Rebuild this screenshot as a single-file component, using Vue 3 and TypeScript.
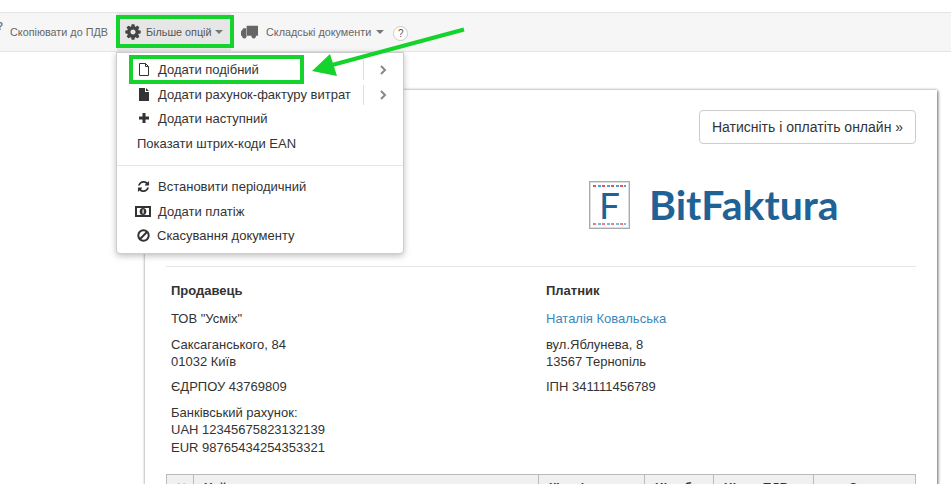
<script setup lang="ts">
const cog = 'M1152 896q0-106-75-181t-181-75-181 75-75 181 75 181 181 75 181-75 75-181zm512-109v222q0 12-8 23t-20 13l-185 28q-19 54-39 91 35 50 107 138 10 12 10 25t-9 23q-27 37-99 108t-94 71q-12 0-26-9l-138-108q-44 23-91 38-16 136-29 186-7 28-36 28h-222q-14 0-24.500-8.500t-11.500-21.500l-28-184q-49-16-90-37l-141 107q-10 9-25 9-14 0-25-11-126-114-165-168-7-10-7-23 0-12 8-23 15-21 51-66.500t54-70.500q-27-50-41-99l-183-27q-13-2-21-12.500t-8-23.500v-222q0-12 8-23t19-13l186-28q14-46 39-92-40-57-107-138-10-12-10-24 0-10 9-23 26-36 98.500-107.500t94.500-71.500q13 0 26 10l138 107q44-23 91-38 16-136 29-186 7-28 36-28h222q14 0 24.500 8.500t11.500 21.500l28 184q49 16 90 37l142-107q9-9 24-9 13 0 25 10 129 119 165 170 7 8 7 22 0 12-8 23-15 21-51 66.500t-54 70.500q26 50 41 98l183 28q13 2 21 12.500t8 23.500z'
const refresh = 'M1639 1056q0 5-1 7-64 268-268 434.500t-478 166.500q-146 0-282.500-55t-243.500-157l-129 129q-19 19-45 19t-45-19-19-45v-448q0-26 19-45t45-19h448q26 0 45 19t19 45-19 45l-137 137q71 66 161 102t187 36q134 0 250-65t186-179q11-17 53-117 8-23 30-23h192q13 0 22.500 9.500t9.500 22.500zm25-800v448q0 26-19 45t-45 19h-448q-26 0-45-19t-19-45 19-45l138-138q-148-137-349-137-134 0-250 65t-186 179q-11 17-53 117-8 23-30 23h-199q-13 0-22.500-9.500t-9.500-22.500v-7q65-268 270-434.500t480-166.500q146 0 284 55.500t245 156.500l130-129q19-19 45-19t45 19 19 45z'
const columns = [
  { label: '№', width: 27, align: 'center' },
  { label: 'Найменування', width: 345, align: 'left' },
  { label: 'Кількість', width: 106, align: 'left' },
  { label: 'Ціна без', width: 69, align: 'center' },
  { label: 'Ціна з ПДВ', width: 100, align: 'left' },
  { label: 'Сума', width: 100, align: 'center' },
]
</script>

<template>
  <div class="page">
    <div class="toolbar">
      <span class="clipped">?</span>
      <span class="tool copy">Скопіювати до ПДВ</span>
      <span class="tool more">
        <svg class="gear" viewBox="0 0 1792 1792"><path :d="cog" /></svg>
        <span>Більше опцій</span>
        <i class="caret tight"></i>
      </span>
      <span class="tool docs">
        <svg class="truck" viewBox="0 0 18 14">
          <path d="M6 0.500h12v10.500H6zM0 6.500 2.500 3H5.500v8H0z" />
          <circle cx="3.500" cy="11.500" r="2.300" />
          <circle cx="13.500" cy="11.500" r="2.300" />
        </svg>
        <span>Складські документи</span>
        <i class="caret"></i>
      </span>
      <span class="help">?</span>
    </div>

    <main class="sheet">
      <div class="pay-row"><button class="pay" type="button">Натисніть і оплатіть онлайн »</button></div>
      <div class="logo">
        <div class="mark">
          <span class="stripe"></span>
          <span class="mark-letter">F</span>
          <span class="stripe faded"></span>
        </div>
        <span class="brand">BitFaktura</span>
      </div>
      <hr class="rule" />
      <div class="parties">
        <section>
          <h3>Продавець</h3>
          <p>ТОВ "Усміх"</p>
          <p>Саксаганського, 84<br />01032 Київ</p>
          <p>ЄДРПОУ 43769809</p>
          <p>Банківський рахунок:<br />UAH 12345675823132139<br />EUR 98765434254353321</p>
        </section>
        <section>
          <h3>Платник</h3>
          <p class="link">Наталія Ковальська</p>
          <p>вул.Яблунева, 8<br />13567 Тернопіль</p>
          <p>ІПН 341111456789</p>
        </section>
      </div>
      <div class="table-head">
        <div
          v-for="col in columns"
          :key="col.label"
          class="th"
          :style="{ width: col.width + 'px', textAlign: col.align }"
        >{{ col.label }}</div>
      </div>
    </main>

    <div class="menu">
      <div class="row split">
        <svg class="ic file" viewBox="0 0 10 13"><path d="M.5.500h6l3 3v9H.500z M6.500.500v3h3" fill="#fff" stroke="#333" stroke-width="1" /></svg>
        <span class="label">Додати подібний</span>
        <span class="chev">
          <svg viewBox="0 0 8 10"><path d="M2 1l4 4-4 4" /></svg>
        </span>
      </div>
      <div class="row split">
        <svg class="ic file" viewBox="0 0 10 13"><path d="M0 0h6v4h4v9H0zM7 0l3 3H7z" fill="#333" /></svg>
        <span class="label">Додати рахунок-фактуру витрат</span>
        <span class="chev">
          <svg viewBox="0 0 8 10"><path d="M2 1l4 4-4 4" /></svg>
        </span>
      </div>
      <div class="row">
        <svg class="ic plus" viewBox="0 0 10 10"><path d="M3.500 0h3v3.500H10v3H6.500V10h-3V6.500H0v-3h3.500z" fill="#333" /></svg>
        <span class="label">Додати наступний</span>
      </div>
      <div class="row plain"><span class="label">Показати штрих-коди EAN</span></div>
      <div class="divider"></div>
      <div class="row">
        <svg class="ic wide" viewBox="0 0 1792 1792"><path :d="refresh" fill="#333" /></svg>
        <span class="label">Встановити періодичний</span>
      </div>
      <div class="row">
        <svg class="ic money" viewBox="0 0 16 11">
          <path fill-rule="evenodd" fill="#333" d="M0 0h16v11H0zM2 2v7h12V2z" />
          <ellipse cx="8" cy="5.500" rx="3.300" ry="3.500" fill="#333" />
          <rect x="7.500" y="3.500" width="1.200" height="4" fill="#fff" />
        </svg>
        <span class="label">Додати платіж</span>
      </div>
      <div class="row tight-row">
        <svg class="ic wide" viewBox="0 0 13 13">
          <circle cx="6.500" cy="6.500" r="5.200" fill="none" stroke="#333" stroke-width="2" />
          <path d="M2.800 10.200 10.200 2.800" stroke="#333" stroke-width="2" />
        </svg>
        <span class="label">Скасування документу</span>
      </div>
    </div>

    <div class="hl hl-more"></div>
    <div class="hl hl-item"></div>
    <svg class="arrow" viewBox="0 0 951 484">
      <path d="M464 29.500 332 65" stroke="#14d32c" stroke-width="4" fill="none" />
      <path d="M312 71 330 54 337 76z" fill="#14d32c" />
    </svg>
  </div>
</template>

<style>
html, body { margin: 0; background: #fff; }
</style>

<style scoped>
.page {
  position: relative;
  width: 951px;
  height: 484px;
  overflow: hidden;
  padding-top: 12px;
  box-sizing: border-box;
  font-family: "Liberation Sans", Arial, sans-serif;
  color: #333;
  background: #fff;
}
.toolbar {
  display: flex;
  align-items: stretch;
  height: 38px;
  background: #f6f6f6;
  border-top: 1px solid #e4e4e4;
  border-bottom: 1px solid #e4e4e4;
  font-size: 10.800px;
  color: #666;
}
.clipped {
  width: 13px;
  margin-left: -3px;
  font-size: 10px;
  line-height: 28px;
  font-weight: bold;
  color: #777;
}
.tool { display: flex; align-items: center; }
.copy { width: 107px; }
.more {
  width: 114px;
  background: #e6e6e6;
  padding-left: 7px;
  box-sizing: border-box;
  color: #555;
}
.gear { width: 18px; height: 18px; fill: #444; margin-right: 4px; }
.caret {
  display: inline-block;
  margin-left: 5px;
  border-left: 4.500px solid transparent;
  border-right: 4.500px solid transparent;
  border-top: 4.500px solid #777;
}
.caret.tight { margin-left: 3px; }
.docs { margin-left: 10px; }
.truck { width: 17px; height: 14px; fill: #666; margin-right: 8px; }
.help {
  align-self: center;
  width: 15px;
  height: 15px;
  margin: 2px 0 0 9px;
  border: 1px solid #ccc;
  border-radius: 50%;
  background: #fff;
  box-sizing: border-box;
  font-size: 10px;
  line-height: 14px;
  text-align: center;
  color: #555;
}
.sheet {
  width: 792px;
  margin: 38px 0 0 145px;
  height: 500px;
  padding: 20px 21px 0;
  box-sizing: border-box;
  background: #fff;
  box-shadow: 1px 1px 3px #777, 0 0 3px #bbb;
}
.pay-row { display: flex; justify-content: flex-end; }
.pay {
  width: 217px;
  height: 34px;
  padding: 0;
  background: #fff;
  border: 1px solid #ccc;
  border-radius: 4px;
  font: 14px "Liberation Sans", Arial, sans-serif;
  color: #333;
}
.logo {
  display: flex;
  align-items: center;
  margin: 37px 0 0 423px;
  height: 48px;
}
.mark {
  width: 41px;
  height: 48px;
  border: 1px solid #aaa;
  box-shadow: inset 0 0 0 1px #ddd;
  box-sizing: border-box;
  display: flex;
  flex-direction: column;
  align-items: center;
  justify-content: space-between;
  padding: 3px 3px;
}
.stripe {
  width: 33px;
  height: 2px;
  background: repeating-linear-gradient(90deg, #e8505b 0 3px, #fff 3px 4.500px, #4aa3d8 4.500px 7.500px, #fff 7.500px 9px);
}
.stripe.faded { opacity: 0.75; }
.mark-letter {
  font: 400 37px/36px Lato, sans-serif;
  color: #1f6296;
}
.brand {
  margin-left: 19px;
  font: 700 41px/48px Lato, sans-serif;
  color: #1f6296;
}
.rule {
  border: 0;
  border-top: 1px solid #e6e6e6;
  margin: 37px 0 0;
}
.parties {
  display: grid;
  grid-template-columns: 375px 1fr;
  height: 207px;
  box-sizing: border-box;
  padding: 15px 0 0 5px;
  font-size: 13px;
}
h3 {
  margin: 0 0 11.300px;
  font-size: 13px;
  line-height: 17px;
  font-weight: bold;
}
p {
  margin: 0 0 7.800px;
  font-size: 13px;
  line-height: 17.500px;
}
.link { color: #3a87bd; }
.table-head {
  display: flex;
  width: 750px;
  height: 40px;
  background: #f0f0f0;
  border: 1px solid #bbb;
  box-sizing: border-box;
}
.th {
  box-sizing: border-box;
  border-right: 1px solid #bbb;
  padding: 6px 10px 0;
  font-size: 12px;
  font-weight: bold;
  white-space: nowrap;
  overflow: hidden;
}
.th:last-child { border-right: 0; }
.menu {
  position: absolute;
  left: 116px;
  top: 52px;
  width: 288px;
  box-sizing: border-box;
  padding: 4.300px 0 5.700px;
  background: #fff;
  border: 1px solid #ccc;
  border-radius: 0 0 4px 4px;
  box-shadow: 0 2px 6px rgba(0, 0, 0, 0.25);
  font-size: 13px;
}
.row {
  position: relative;
  display: flex;
  align-items: center;
  height: 24.500px;
  padding-left: 41px;
  white-space: nowrap;
}
.plain { padding-left: 20px; }
.label { color: #333; }
.ic { position: absolute; }
.file { left: 22px; width: 10px; height: 13px; top: 6px; }
.plus { left: 22px; width: 10px; height: 10px; top: 7px; }
.wide { left: 20px; width: 13px; height: 13px; top: 6px; }
.money { left: 18px; width: 16px; height: 11px; top: 7px; }
.tight-row { padding-left: 40px; }
.chev {
  position: absolute;
  left: 246px;
  top: 3px;
  width: 37px;
  height: 20px;
  border-left: 1px solid #ddd;
  display: flex;
  align-items: center;
  justify-content: center;
}
.chev svg { width: 8px; height: 10px; fill: none; stroke: #888; stroke-width: 2; }
.divider {
  height: 1px;
  background: #e5e5e5;
  margin: 10px 0 8px;
}
.hl {
  position: absolute;
  box-sizing: border-box;
  border: 4px solid #14d32c;
}
.hl-more { left: 116px; top: 15px; width: 118px; height: 33px; }
.hl-item { left: 129px; top: 55px; width: 175px; height: 29px; }
.arrow {
  position: absolute;
  inset: 0;
  width: 951px;
  height: 484px;
  pointer-events: none;
}
</style>
